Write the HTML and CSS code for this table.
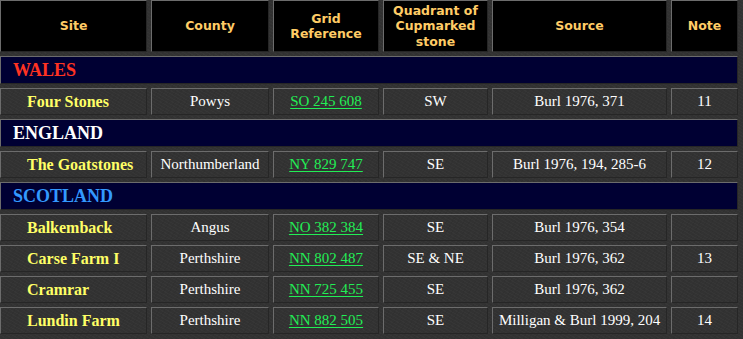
FILE: index.html
```html
<!DOCTYPE html>
<html lang="en">
<head>
<meta charset="utf-8">
<title>Cupmarked stones</title>
<link rel="stylesheet" href="styles.css">
</head>
<body>
<div class="sites">
  <div class="hd">Site</div>
  <div class="hd">County</div>
  <div class="hd">Grid<br>Reference</div>
  <div class="hd">Quadrant of<br>Cupmarked<br>stone</div>
  <div class="hd">Source</div>
  <div class="hd">Note</div>

  <div class="section wales">WALES</div>
  <div class="cell site">Four Stones</div>
  <div class="cell">Powys</div>
  <div class="cell"><a href="#" class="grid">SO 245 608</a></div>
  <div class="cell">SW</div>
  <div class="cell">Burl 1976, 371</div>
  <div class="cell">11</div>

  <div class="section england">ENGLAND</div>
  <div class="cell site">The Goatstones</div>
  <div class="cell">Northumberland</div>
  <div class="cell"><a href="#" class="grid">NY 829 747</a></div>
  <div class="cell">SE</div>
  <div class="cell">Burl 1976, 194, 285-6</div>
  <div class="cell">12</div>

  <div class="section scotland">SCOTLAND</div>
  <div class="cell site">Balkemback</div>
  <div class="cell">Angus</div>
  <div class="cell"><a href="#" class="grid">NO 382 384</a></div>
  <div class="cell">SE</div>
  <div class="cell">Burl 1976, 354</div>
  <div class="cell"></div>

  <div class="cell site">Carse Farm I</div>
  <div class="cell">Perthshire</div>
  <div class="cell"><a href="#" class="grid">NN 802 487</a></div>
  <div class="cell">SE &amp; NE</div>
  <div class="cell">Burl 1976, 362</div>
  <div class="cell">13</div>

  <div class="cell site">Cramrar</div>
  <div class="cell">Perthshire</div>
  <div class="cell"><a href="#" class="grid">NN 725 455</a></div>
  <div class="cell">SE</div>
  <div class="cell">Burl 1976, 362</div>
  <div class="cell"></div>

  <div class="cell site">Lundin Farm</div>
  <div class="cell">Perthshire</div>
  <div class="cell"><a href="#" class="grid">NN 882 505</a></div>
  <div class="cell">SE</div>
  <div class="cell">Milligan &amp; Burl 1999, 204</div>
  <div class="cell">14</div>
</div>
</body>
</html>
```
FILE: styles.css
```css
html, body {
  margin: 0;
  padding: 0;
}
body {
  background-color: #323232;
  background-image:
    repeating-linear-gradient(30deg, rgba(255,255,255,0.018) 0 1px, transparent 1px 3px),
    repeating-linear-gradient(-60deg, rgba(0,0,0,0.04) 0 1px, transparent 1px 5px);
  font-family: "Liberation Serif", "Times New Roman", serif;
  color: #ffffff;
  width: 743px;
  height: 339px;
  overflow: hidden;
}
.sites {
  display: grid;
  grid-template-columns: 147px 118px 106px 105px 175px 67px;
  gap: 4px;
  width: 738px;
}
.hd, .cell, .section {
  box-sizing: border-box;
  border-top: 1px solid #6c6c6c;
  border-left: 1px solid #6c6c6c;
  border-right: 1px solid #262626;
  border-bottom: 1px solid #262626;
  display: flex;
  align-items: center;
  justify-content: center;
  text-align: center;
}
.hd {
  height: 52px;
  background: #000000;
  color: #ffcc66;
  font-family: "DejaVu Sans", Verdana, sans-serif;
  font-weight: bold;
  font-size: 12.5px;
  line-height: 15.5px;
}
.section {
  grid-column: 1 / -1;
  height: 28px;
  background: #000033;
  justify-content: flex-start;
  padding-left: 12px;
  font-weight: bold;
  font-size: 18px;
}
.wales { color: #ff3322; }
.england { color: #ffffff; }
.scotland { color: #3399ff; }
.cell {
  height: 27px;
  font-size: 15px;
  color: #ffffff;
}
.site {
  justify-content: flex-start;
  padding-left: 26px;
  font-weight: bold;
  font-size: 16px;
  color: #ffff66;
}
.grid {
  color: #22ee55;
  text-decoration: underline;
  text-underline-offset: 2px;
}
```
